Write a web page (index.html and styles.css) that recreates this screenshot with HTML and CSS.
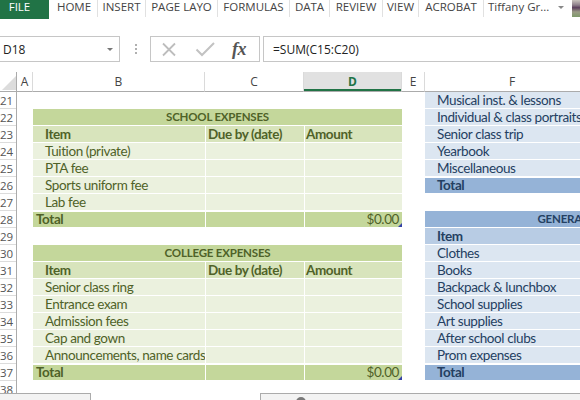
FILE: index.html
```html
<!DOCTYPE html>
<html>
<head>
<meta charset="utf-8">
<title>School expenses</title>
<link rel="stylesheet" href="styles.css">
</head>
<body>
<div class="app">
  <div class="tabs">
    <div class="tab file">FILE</div>
    <div class="tab w-home">HOME</div>
    <div class="tab w-insert">INSERT</div>
    <div class="tab w-page">PAGE LAYO</div>
    <div class="tab w-formulas">FORMULAS</div>
    <div class="tab w-data">DATA</div>
    <div class="tab w-review">REVIEW</div>
    <div class="tab w-view">VIEW</div>
    <div class="tab w-acrobat">ACROBAT</div>
    <div class="user"><span class="user-name">Tiffany Gr...</span><span class="caret"></span><span class="avatar"></span></div>
  </div>

  <div class="fbar">
    <div class="namebox"><span>D18</span><span class="nb-arrow"></span></div>
    <div class="grip"><i></i><i></i><i></i></div>
    <div class="fbtns">
      <svg class="fb-icons" width="74" height="24" viewBox="0 0 74 24">
        <path d="M12 6.5 L24 18.5 M24 6.5 L12 18.5" stroke="#bdbdbd" stroke-width="1.8" fill="none"/>
        <path d="M45.5 12.5 L51 18 L63 6" stroke="#c2c2c2" stroke-width="2" fill="none"/>
      </svg>
      <span class="fx">fx</span>
    </div>
    <div class="finput">=SUM(C15:C20)</div>
  </div>

  <div class="sheet">
    <div class="ch corner"><span class="tri"></span></div>
    <div class="ch">A</div>
    <div class="ch">B</div>
    <div class="ch">C</div>
    <div class="ch sel">D</div>
    <div class="ch">E</div>
    <div class="ch">F</div>

    <div class="rownums">
      <div class="rn">21</div><div class="rn">22</div><div class="rn">23</div><div class="rn">24</div>
      <div class="rn">25</div><div class="rn">26</div><div class="rn">27</div><div class="rn">28</div>
      <div class="rn">29</div><div class="rn">30</div><div class="rn">31</div><div class="rn">32</div>
      <div class="rn">33</div><div class="rn">34</div><div class="rn">35</div><div class="rn">36</div>
      <div class="rn">37</div><div class="rn">38</div>
    </div>

    <div class="tbl green t-school">
      <div class="trow title">SCHOOL EXPENSES</div>
      <div class="trow head"><div class="c cb">Item</div><div class="c cc">Due by (date)</div><div class="c cd">Amount</div></div>
      <div class="trow body"><div class="c cb">Tuition (private)</div><div class="c cc"></div><div class="c cd"></div></div>
      <div class="trow body"><div class="c cb">PTA fee</div><div class="c cc"></div><div class="c cd"></div></div>
      <div class="trow body"><div class="c cb">Sports uniform fee</div><div class="c cc"></div><div class="c cd"></div></div>
      <div class="trow body"><div class="c cb">Lab fee</div><div class="c cc"></div><div class="c cd"></div></div>
      <div class="trow total"><div class="c cb tl">Total</div><div class="c cc"></div><div class="c cd amt">$0.00<span class="handle"></span></div></div>
    </div>

    <div class="tbl green t-college">
      <div class="trow title">COLLEGE EXPENSES</div>
      <div class="trow head"><div class="c cb">Item</div><div class="c cc">Due by (date)</div><div class="c cd">Amount</div></div>
      <div class="trow body"><div class="c cb">Senior class ring</div><div class="c cc"></div><div class="c cd"></div></div>
      <div class="trow body"><div class="c cb">Entrance exam</div><div class="c cc"></div><div class="c cd"></div></div>
      <div class="trow body"><div class="c cb">Admission fees</div><div class="c cc"></div><div class="c cd"></div></div>
      <div class="trow body"><div class="c cb">Cap and gown</div><div class="c cc"></div><div class="c cd"></div></div>
      <div class="trow body"><div class="c cb">Announcements, name cards</div><div class="c cc"></div><div class="c cd"></div></div>
      <div class="trow total"><div class="c cb tl">Total</div><div class="c cc"></div><div class="c cd amt">$0.00<span class="handle"></span></div></div>
    </div>

    <div class="tbl blue t-activities">
      <div class="trow body">Musical inst. &amp; lessons</div>
      <div class="trow body">Individual &amp; class portraits</div>
      <div class="trow body">Senior class trip</div>
      <div class="trow body">Yearbook</div>
      <div class="trow body">Miscellaneous</div>
      <div class="trow total">Total</div>
    </div>

    <div class="tbl blue t-general">
      <div class="trow title">GENERAL EXPENSES</div>
      <div class="trow head">Item</div>
      <div class="trow body">Clothes</div>
      <div class="trow body">Books</div>
      <div class="trow body">Backpack &amp; lunchbox</div>
      <div class="trow body">School supplies</div>
      <div class="trow body">Art supplies</div>
      <div class="trow body">After school clubs</div>
      <div class="trow body">Prom expenses</div>
      <div class="trow total">Total</div>
    </div>
  </div>

  <div class="status">
    <div class="st-left"></div>
    <div class="st-gap"></div>
    <div class="st-right"><span class="st-dot"></span></div>
  </div>
</div>
</body>
</html>
```

FILE: styles.css
```css
* { box-sizing: border-box; margin: 0; padding: 0; }
html, body { width: 580px; height: 400px; overflow: hidden; background: #fff; }
body { font-family: "Open Sans", "Noto Sans", sans-serif; color: #444; }

.app { width: 580px; height: 400px; overflow: hidden; display: flex; flex-direction: column; }

/* ribbon tabs */
.tabs { display: flex; height: 19px; flex: none; }
.tab {
  height: 17px; border-right: 1px solid #e1e1e1;
  font-size: 11.5px; line-height: 14px; text-align: center; color: #444;
  white-space: nowrap;
}
.file { width: 49px; height: 19px; background: #217346; color: #fff; border-right: none; padding-right: 10px; }
.w-home { width: 49px; padding-left: 2px; }
.w-insert { width: 48px; }
.w-page { width: 72px; }
.w-formulas { width: 72px; }
.w-data { width: 40px; }
.w-review { width: 53px; }
.w-view { width: 36px; }
.w-acrobat { width: 65px; }
.user { display: flex; align-items: flex-start; padding-left: 4px; flex: 1; }
.user-name { font-size: 11.5px; line-height: 14px; color: #444; white-space: nowrap; }
.caret {
  width: 0; height: 0; margin: 6px 0 0 9px;
  border-left: 3px solid transparent; border-right: 3px solid transparent; border-top: 3px solid #888;
}
.avatar {
  margin-left: auto; width: 8px; height: 17px;
  background: linear-gradient(180deg, #c9c3bd 0%, #8d7f8a 30%, #5b3f5c 45%, #9b9b86 70%, #7f9a6a 100%);
}

/* formula bar */
.fbar { display: flex; height: 26px; margin-top: 17px; flex: none; }
.namebox {
  width: 120px; border: 1px solid #c6c6c6; border-left: none;
  display: flex; align-items: center; padding-left: 3px;
  font-size: 12px; color: #222;
}
.nb-arrow {
  margin-left: auto; margin-right: 6px; width: 0; height: 0;
  border-left: 3px solid transparent; border-right: 3px solid transparent; border-top: 3px solid #777;
}
.grip { width: 30px; display: flex; flex-direction: column; align-items: center; justify-content: center; gap: 2px; padding-left: 1px; }
.grip i { display: block; width: 2px; height: 2px; background: #b0b0b0; }
.fbtns { width: 110px; border: 1px solid #c6c6c6; display: flex; align-items: center; }
.fb-icons { display: block; flex: none; }
.fx {
  font-family: "Liberation Serif", "DejaVu Serif", serif; font-style: italic; font-weight: bold;
  font-size: 18px; line-height: 20px; color: #555; margin-left: 7px; letter-spacing: -0.5px;
}
.finput {
  flex: 1; margin-left: 3px; border: 1px solid #c6c6c6; border-right: none;
  display: flex; align-items: center; padding-left: 9px;
  font-size: 12px; color: #222;
}

/* sheet */
.sheet {
  flex: none; width: 580px; margin-top: 10px; overflow: hidden;
  display: grid;
  grid-template-columns: 17px 16px 172px 99px 98px 23px 175px;
  grid-template-rows: 20px repeat(17, 17px) 12px;
}
.ch {
  grid-row: 1;
  border-right: 1px solid #dadada; border-bottom: 1px solid #ababab;
  display: flex; align-items: center; justify-content: center;
  font-size: 12px; color: #444;
}
.ch.corner { border-right-color: #ababab; align-items: flex-end; justify-content: flex-end; }
.tri {
  width: 0; height: 0; margin: 0 0 1px 0;
  border-left: 14px solid transparent; border-bottom: 14px solid #dcdcdc;
}
.ch.sel { background: #e1e1e1; color: #217346; font-weight: bold; box-shadow: inset 0 -2px 0 #217346; }

.rownums {
  grid-column: 1; grid-row: 2 / -1; overflow: hidden;
  display: grid; grid-auto-rows: 17px;
  border-right: 1px solid #ababab;
}
.rn {
  display: flex; justify-content: flex-end; align-items: center;
  padding-right: 6px; border-bottom: 1px solid #dcdcdc;
  font-size: 11.5px; color: #555; white-space: nowrap;
}

/* tables */
.tbl {
  display: grid; grid-auto-rows: 17px;
  font-family: "Lato", "Liberation Sans", sans-serif; font-size: 13.5px; letter-spacing: -0.4px;
}
.t-school { grid-column: 3 / 6; grid-row: 3 / span 7; }
.t-college { grid-column: 3 / 6; grid-row: 11 / span 8; }
.t-activities { grid-column: 7; grid-row: 2 / span 6; width: 332px; }
.t-general { grid-column: 7; grid-row: 9 / span 10; width: 332px; }

.trow {
  height: 17px; border-bottom: 1px solid #fff; line-height: 16px; white-space: nowrap; overflow: hidden;
}
.green .trow { display: grid; grid-template-columns: 172px 99px 98px; color: #4f6228; }
.green .title { display: block; background: #c4d79b; text-align: center; font-weight: bold; font-size: 11.5px; letter-spacing: -0.2px; }
.green .head { background: #d8e4bc; font-weight: bold; }
.green .body { background: #ebf1de; }
.green .total { background: #c4d79b; font-weight: bold; border-top: 1px solid #fff; line-height: 15px; }

.c { position: relative; overflow: hidden; }
.cb { padding-left: 12px; }
.cb.tl { padding-left: 3px; }
.cc { border-left: 1px solid #fff; padding-left: 2px; }
.cd { border-left: 1px solid #fff; padding-left: 1px; overflow: visible; }
.amt { text-align: right; padding-right: 3px; font-weight: normal; }
.handle {
  position: absolute; right: 0; bottom: 0; width: 0; height: 0;
  border-left: 4px solid transparent; border-bottom: 4px solid #3442a6;
}

.blue .trow { color: #244062; padding-left: 12px; }
.blue .title { background: #95b3d7; text-align: center; font-weight: bold; padding-left: 0; font-size: 11.5px; letter-spacing: -0.2px; }
.blue .head { background: #b8cce4; font-weight: bold; }
.blue .body { background: #dce6f1; }
.blue .total { background: #95b3d7; font-weight: bold; border-top: 1px solid #fff; line-height: 15px; }

/* bottom strip */
.status { flex: none; height: 7px; display: flex; overflow: hidden; }
.st-left { width: 91px; border-top: 1px solid #ababab; border-right: 1px solid #ababab; background: #f3f3f3; }
.st-gap { width: 169px; }
.st-right { flex: 1; border-top: 1px solid #ababab; border-left: 1px solid #ababab; background: #f3f3f3; padding: 3px 0 0 35px; }
.st-dot { display: block; width: 10px; height: 10px; border-radius: 50%; background: #7a7a7a; }
```
